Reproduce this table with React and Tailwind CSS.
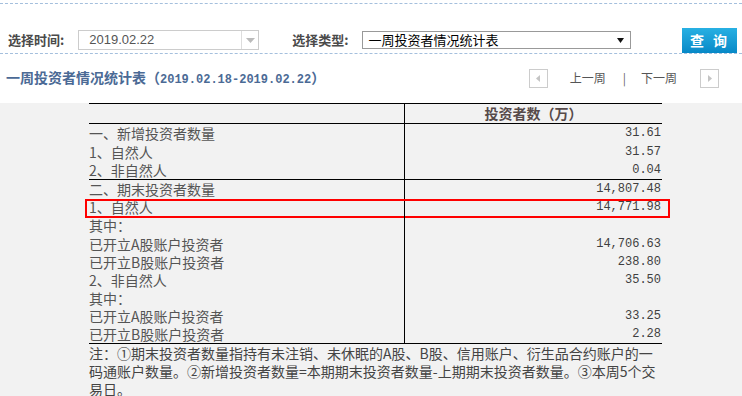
import React from "react";

const CJK = { fontFamily: '"Noto Sans CJK SC", sans-serif' };
const MONO = { fontFamily: '"Liberation Mono", "Noto Sans CJK SC", monospace' };

const section1 = [
  ["一、新增投资者数量", "31.61"],
  ["1、自然人", "31.57"],
  ["2、非自然人", "0.04"],
];

const section2 = [
  ["二、期末投资者数量", "14,807.48"],
  ["1、自然人", "14,771.98", true],
  ["其中：", ""],
  ["已开立A股账户投资者", "14,706.63"],
  ["已开立B股账户投资者", "238.80"],
  ["2、非自然人", "35.50"],
  ["其中：", ""],
  ["已开立A股账户投资者", "33.25"],
  ["已开立B股账户投资者", "2.28"],
];

function Row({ label, value, mark, h }) {
  return (
    <div className={`relative flex ${h} items-center`}>
      <div className="w-[315px] text-[14px] leading-[18px] text-[#555] whitespace-nowrap" style={CJK}>{label}</div>
      <div className="w-[258px] h-full flex items-center justify-end border-l border-black pr-[1px] text-[12px] text-[#3f3f3f]" style={MONO}>{value}</div>
      {mark && <div className="absolute -left-[4px] -right-[8px] top-[1px] -bottom-[2px] border-2 border-[#f00]" />}
    </div>
  );
}

export default function App() {
  return (
    <div className="w-[742px] h-[396px] bg-white overflow-hidden flex flex-col">
      <div className="h-[3px] shrink-0" />
      <div className="border-t border-dashed border-[#a4bfdd] shrink-0" />

      {/* filter row */}
      <div className="h-[49px] shrink-0 flex items-center pt-[23px]">
        <span className="ml-[8px] text-[13px] font-bold text-[#4a4a4a]" style={CJK}>选择时间:</span>
        <div className="ml-[14px] w-[181px] h-[20px] border border-[#ccc] flex items-center">
          <span className="flex-1 pl-[10px] text-[13px] text-[#555]" style={{ fontFamily: '"Liberation Sans", sans-serif' }}>2019.02.22</span>
          <div className="w-[17px] h-full border-l border-[#ddd] flex items-center justify-center">
            <svg width="9" height="5" viewBox="0 0 9 5"><path d="M0 0h9L4.5 5z" fill="#bbb" /></svg>
          </div>
        </div>
        <span className="ml-[33px] text-[13px] font-bold text-[#4a4a4a]" style={CJK}>选择类型:</span>
        <div className="ml-[14px] w-[269px] h-[18px] border border-[#999] flex items-center">
          <span className="flex-1 pl-[5px] text-[13px] leading-[16px] text-black" style={CJK}>一周投资者情况统计表</span>
          <svg className="mr-[6px]" width="7" height="5" viewBox="0 0 7 5"><path d="M0 0h7L3.5 5z" fill="#111" /></svg>
        </div>
        <button className="ml-[51px] w-[55px] h-[25px] bg-gradient-to-b from-[#27b0e3] to-[#0689c7] text-white text-[14px] font-bold tracking-[3px] flex items-center justify-center" style={CJK}>查 询</button>
      </div>
      <div className="border-t border-dashed border-[#a4bfdd] shrink-0" />

      {/* title row */}
      <div className="h-[49px] shrink-0 flex items-center justify-between pb-[1px]">
        <div className="ml-[6px] text-[14px] font-bold text-[#4b6a95] whitespace-nowrap" style={CJK}>
          一周投资者情况统计表（<span className="text-[12px]" style={MONO}>2019.02.18-2019.02.22</span>）
        </div>
        <div className="flex items-center mr-[23px] text-[12px] text-[#555]" style={CJK}>
          <div className="w-[19px] h-[19px] border border-[#ccc] flex items-center justify-center">
            <svg width="4" height="7" viewBox="0 0 4 7"><path d="M4 0v7L0 3.5z" fill="#c4c4c4" /></svg>
          </div>
          <span className="ml-[22px]">上一周</span>
          <span className="ml-[17px] text-[#666]">|</span>
          <span className="ml-[15px]">下一周</span>
          <div className="ml-[23px] w-[19px] h-[19px] border border-[#ccc] flex items-center justify-center">
            <svg width="4" height="7" viewBox="0 0 4 7"><path d="M0 0v7L4 3.5z" fill="#c4c4c4" /></svg>
          </div>
        </div>
      </div>

      {/* table area */}
      <div className="flex-1 bg-[#f2f2f2]">
        <div className="ml-[89px] w-[573px]">
          <div className="flex h-[21px] border-t border-b border-black">
            <div className="w-[315px]" />
            <div className="w-[258px] border-l border-black flex items-center justify-center text-[14px] font-bold text-[#574a4a]" style={CJK}>投资者数（万）</div>
          </div>
          <div className="border-b border-black">
            {section1.map(([l, v], i) => <Row key={i} label={l} value={v} h="h-[18.4px]" />)}
          </div>
          <div className="border-b border-black">
            {section2.map(([l, v, m], i) => <Row key={i} label={l} value={v} mark={m} h="h-[18.1px]" />)}
          </div>
          <div className="text-[14px] leading-[18px] text-[#444] whitespace-nowrap" style={CJK}>
            <div className="h-[18px]">注：①期末投资者数量指持有未注销、未休眠的A股、B股、信用账户、衍生品合约账户的一</div>
            <div className="h-[18px]">码通账户数量。②新增投资者数量=本期期末投资者数量-上期期末投资者数量。③本周5个交</div>
            <div className="h-[18px]">易日。</div>
          </div>
        </div>
      </div>
    </div>
  );
}
